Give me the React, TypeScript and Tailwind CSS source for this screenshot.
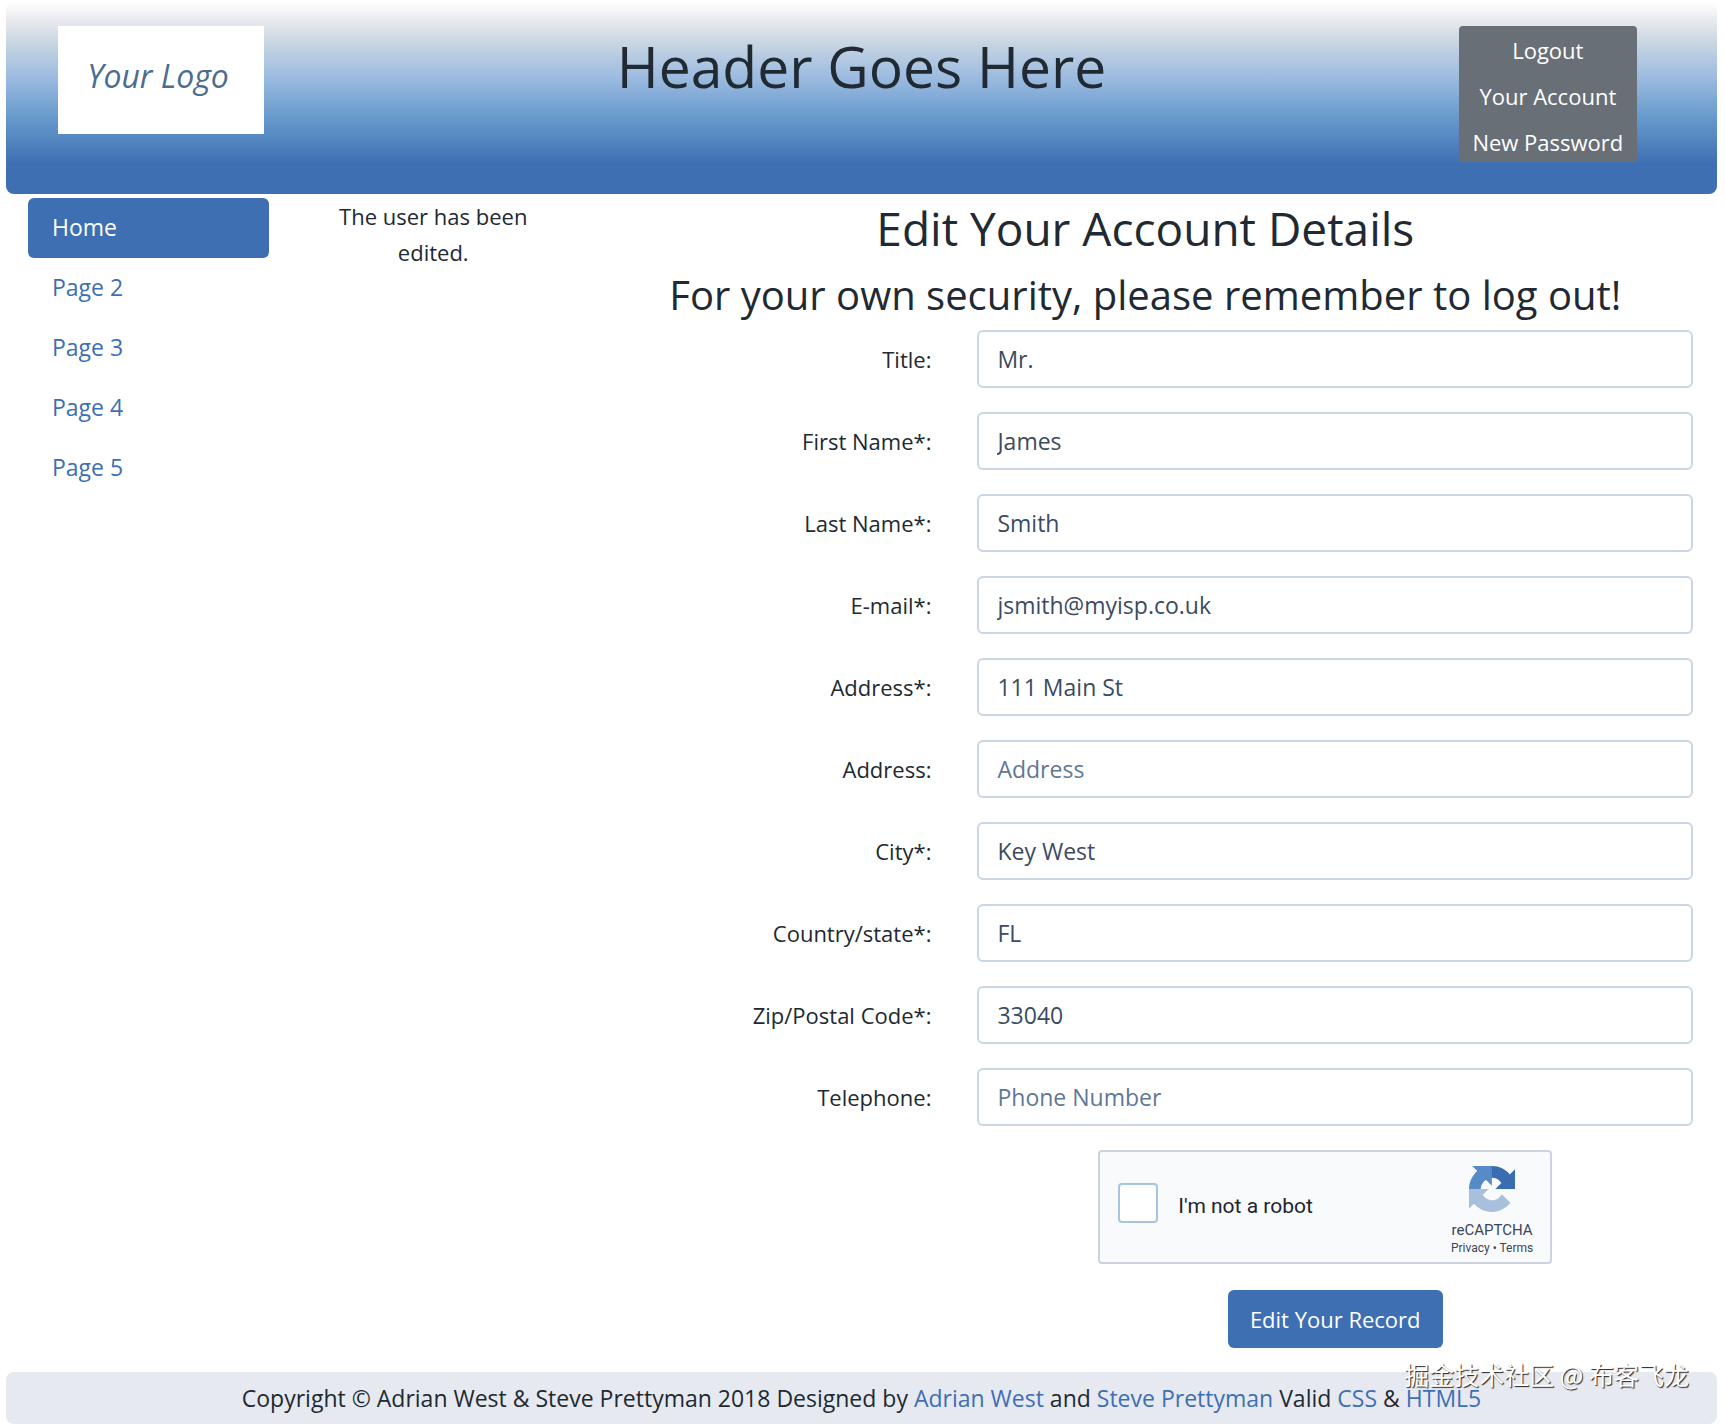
import React from 'react';

interface Field {
  id: string;
  label: string;
  value?: string;
  placeholder?: string;
}

const fields: Field[] = [
  { id: 'title', label: 'Title:', value: 'Mr.' },
  { id: 'first_name', label: 'First Name*:', value: 'James' },
  { id: 'last_name', label: 'Last Name*:', value: 'Smith' },
  { id: 'email', label: 'E-mail*:', value: 'jsmith@myisp.co.uk' },
  { id: 'address1', label: 'Address*:', value: '111 Main St' },
  { id: 'address2', label: 'Address:', placeholder: 'Address' },
  { id: 'city', label: 'City*:', value: 'Key West' },
  { id: 'state', label: 'Country/state*:', value: 'FL' },
  { id: 'zip', label: 'Zip/Postal Code*:', value: '33040' },
  { id: 'phone', label: 'Telephone:', placeholder: 'Phone Number' },
];

const pages = ['Home', 'Page 2', 'Page 3', 'Page 4', 'Page 5'];
const accountLinks = ['Logout', 'Your Account', 'New Password'];

const Header: React.FC = () => (
  <header className="grid grid-cols-12 min-h-48 pt-6 rounded-lg bg-[linear-gradient(to_bottom,#ffffff_0px,#e6e8ee_20px,#c9d6e2_40px,#9bbbe0_76px,#6699cc_116px,#3e6fb3_162px)]">
    <div className="col-span-2 pl-13">
      <div className="w-[206px] h-27 bg-white flex justify-center pt-7 pr-1.5">
        <span className="text-[32px] leading-11 italic text-[#4c6c90]">Your Logo</span>
      </div>
    </div>
    <h1 className="col-span-8 text-center text-[57px] leading-20">Header Goes Here</h1>
    <nav className="col-span-2 pl-[27px]">
      <ul className="w-[178px] h-34 pt-px rounded bg-[#696f77] text-center text-white text-[22px] leading-[46px]">
        {accountLinks.map((link) => (
          <li key={link}>
            <a href="#" className="block">{link}</a>
          </li>
        ))}
      </ul>
    </nav>
  </header>
);

const RecaptchaLogo: React.FC = () => (
  <svg viewBox="0 0 64 64" className="size-[46px]" aria-hidden="true">
    <path fill="#3a6cb2" d="M64 31.955l-.033-1.37V4.687l-7.16 7.16C50.948 4.674 42.033.093 32.05.093c-10.4 0-19.622 4.96-25.458 12.64l11.736 11.86a15.55 15.55 0 0 1 4.754-5.334c2.05-1.6 4.952-2.906 8.968-2.906.485 0 .86.057 1.135.163 4.976.393 9.288 3.14 11.828 7.124l-8.307 8.307L64 31.953" />
    <path fill="#568bc8" d="M31.862.094l-1.37.033H4.594l7.16 7.16C4.58 13.147 0 22.06 0 32.046c0 10.4 4.96 19.622 12.64 25.458L24.5 45.768a15.55 15.55 0 0 1-5.334-4.754c-1.6-2.05-2.906-4.952-2.906-8.968 0-.485.057-.86.163-1.135.393-4.976 3.14-9.288 7.124-11.828l8.307 8.307L31.86.095" />
    <path fill="#a9c0dc" d="M.001 32.045l.033 1.37v25.898l7.16-7.16c5.86 7.173 14.774 11.754 24.76 11.754 10.4 0 19.622-4.96 25.458-12.64l-11.736-11.86a15.55 15.55 0 0 1-4.754 5.334c-2.05 1.6-4.952 2.906-8.968 2.906-.485 0-.86-.057-1.135-.163-4.976-.393-9.288-3.14-11.828-7.124l8.307-8.307c-10.522.04-22.4.066-27.295-.005" />
  </svg>
);

const Recaptcha: React.FC = () => (
  <div className="flex items-center w-[454px] h-[114px] mr-5 pl-[18px] pr-[17px] rounded border-2 border-[#cdd3de] bg-[#f8fafc] font-[Roboto,sans-serif]">
    <input
      id="robot"
      type="checkbox"
      className="appearance-none size-10 mb-2 rounded border-2 border-[#a9c4e2] bg-white"
    />
    <label htmlFor="robot" className="ml-5 mb-0.5 text-[21px] text-[#1d2530]">I'm not a robot</label>
    <div className="ml-auto flex flex-col items-center pt-2 text-[#3c4656]">
      <RecaptchaLogo />
      <div className="text-[15px] leading-5 mt-2">reCAPTCHA</div>
      <div className="text-[12px] leading-4">
        <a href="#">Privacy</a> • <a href="#">Terms</a>
      </div>
    </div>
  </div>
);

const App: React.FC = () => {
  return (
    <div className="relative pt-0.5 pl-1.5 pr-2 bg-white text-[#212932] text-[22px] leading-9 font-['Open_Sans','Noto_Sans',sans-serif]">
      <Header />
      <div className="grid grid-cols-12 pt-1 pr-0.5">
        <nav className="col-span-2 px-[22px] text-[23px]">
          <ul>
            {pages.map((page) => (
              <li key={page}>
                <a
                  href="#"
                  className={
                    page === 'Home'
                      ? 'block px-6 pt-[11px] pb-[13px] rounded-md bg-[#3e6fb3] text-white'
                      : 'block px-6 pt-[11px] pb-[13px] text-[#3e6fb3]'
                  }
                >
                  {page}
                </a>
              </li>
            ))}
          </ul>
        </nav>
        <p className="col-span-2 px-[22px] text-center">The user has been edited.</p>
        <main className="col-span-8">
          <h2 className="text-[46px] leading-[60px] mb-3 text-center">Edit Your Account Details</h2>
          <h3 className="text-[40px] leading-[50px] mb-2.5 text-center">
            For your own security, please remember to log out!
          </h3>
          <form className="flex flex-col gap-6">
            {fields.map((field) => (
              <div key={field.id} className="grid grid-cols-3 items-center">
                <label htmlFor={field.id} className="pr-6 text-right">{field.label}</label>
                <div className="col-span-2 px-[22px]">
                  <input
                    id={field.id}
                    type="text"
                    defaultValue={field.value}
                    placeholder={field.placeholder}
                    className="block w-full h-[58px] px-[18px] rounded-md border-2 border-[#cbd6e4] bg-white text-[23px] text-[#3b4b62] placeholder:text-[#5f7896]"
                  />
                </div>
              </div>
            ))}
            <div className="grid grid-cols-3">
              <div className="col-start-2 col-span-2 flex flex-col items-center gap-[26px]">
                <Recaptcha />
                <button type="button" className="h-[58px] px-[22px] rounded-md bg-[#3e6fb3] text-white">
                  Edit Your Record
                </button>
              </div>
            </div>
          </form>
        </main>
      </div>
      <footer className="mt-6 py-2 rounded-lg bg-[#e6e9f0] text-[23px] text-center">
        Copyright © Adrian West &amp; Steve Prettyman 2018 Designed by{' '}
        <a href="#" className="text-[#3e6fb3]">Adrian West</a> and{' '}
        <a href="#" className="text-[#3e6fb3]">Steve Prettyman</a> Valid{' '}
        <a href="#" className="text-[#3e6fb3]">CSS</a> &amp;{' '}
        <a href="#" className="text-[#3e6fb3]">HTML5</a>
      </footer>
      <div className="absolute right-9 bottom-8 text-[25px] text-white whitespace-nowrap [text-shadow:1px_1px_1px_#222] font-['Noto_Sans_CJK_SC',sans-serif]">
        掘金技术社区 @ 布客飞龙
      </div>
    </div>
  );
};

export default App;
